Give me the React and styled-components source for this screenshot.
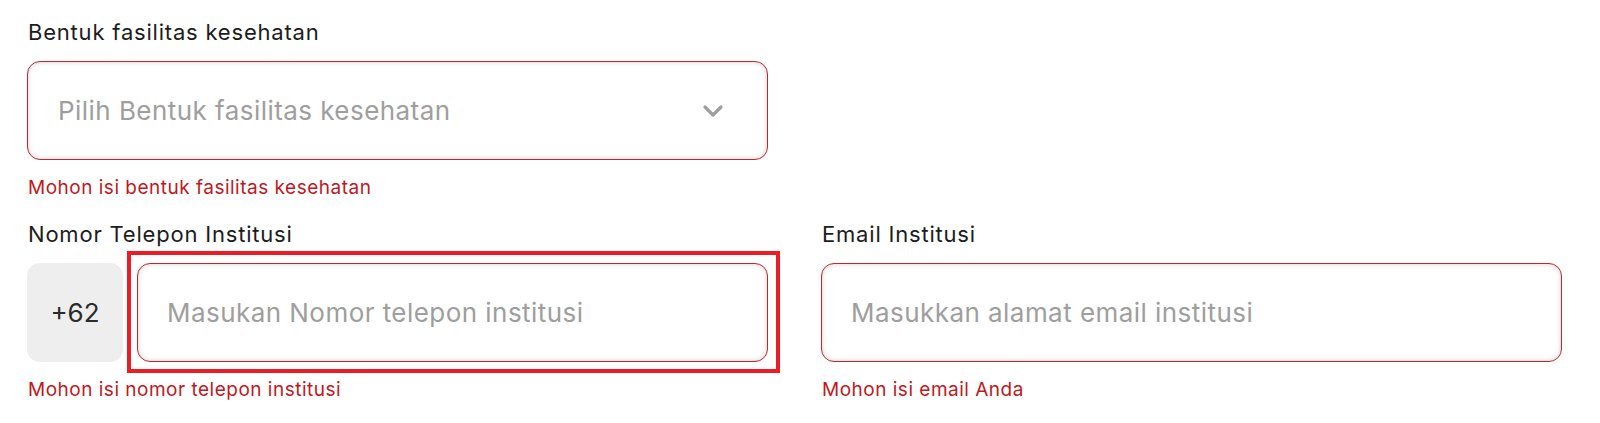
import React from "react";
import styled, { createGlobalStyle } from "styled-components";

const Global = createGlobalStyle`
  html, body { margin: 0; padding: 0; background: #ffffff; }
  body { font-family: Inter, "Noto Sans", sans-serif; }
  * { box-sizing: border-box; }
`;

const Form = styled.form`
  display: grid;
  grid-template-columns: 741px 741px;
  column-gap: 53px;
  row-gap: 20px;
  padding: 18px 0 0 27px;
`;

const Field = styled.div`
  display: flex;
  flex-direction: column;
  grid-column: ${(p) => (p.$full ? "1 / 2" : "auto")};
`;

const Label = styled.label`
  font-size: 22px;
  line-height: 28px;
  letter-spacing: 0.8px;
  color: #1c1c1c;
  margin-bottom: 15px;
  padding-left: 1px;
`;

const ErrorText = styled.span`
  font-size: 19px;
  line-height: 24px;
  letter-spacing: 0.5px;
  color: #c0181d;
  margin-top: 16px;
  padding-left: 1px;
`;

const controlBase = `
  height: 99px;
  border: 1.5px solid #c0262a;
  border-radius: 13px;
  background: #ffffff;
  box-shadow: inset 0 0 5px rgba(0, 0, 0, 0.2);
  font-family: Inter, "Noto Sans", sans-serif;
  font-size: 26px;
  letter-spacing: 0.45px;
`;

const SelectBox = styled.div`
  ${controlBase}
  display: flex;
  align-items: center;
  justify-content: space-between;
  padding: 0 43px 0 30px;
  cursor: pointer;
`;

const Placeholder = styled.span`
  color: #9e9e9e;
`;

const Chevron = styled.svg`
  width: 22px;
  height: 14px;
  display: block;
`;

const PhoneRow = styled.div`
  display: flex;
  gap: 14px;
`;

const Prefix = styled.div`
  width: 96px;
  height: 99px;
  flex: none;
  border-radius: 13px;
  background: #eeeeee;
  display: flex;
  align-items: center;
  justify-content: center;
  font-size: 26px;
  color: #2b2b2b;
`;

const InputWrap = styled.div`
  position: relative;
  flex: 1;
  display: flex;
`;

const Highlight = styled.span`
  position: absolute;
  top: -12px;
  left: -10px;
  right: -12px;
  bottom: -11px;
  border: 4px solid #ed1c24;
  pointer-events: none;
`;

const TextInput = styled.input`
  ${controlBase}
  width: 100%;
  padding: 0 29px;
  color: #222;
  outline: none;
  &::placeholder {
    color: #9e9e9e;
  }
`;

export default function App() {
  return (
    <>
      <Global />
      <Form onSubmit={(e) => e.preventDefault()}>
        <Field $full>
          <Label>Bentuk fasilitas kesehatan</Label>
          <SelectBox role="combobox">
            <Placeholder>Pilih Bentuk fasilitas kesehatan</Placeholder>
            <Chevron viewBox="0 0 22 14" fill="none">
              <path
                d="M3 3 L11 11 L19 3"
                stroke="#9e9e9e"
                strokeWidth="3.2"
                strokeLinecap="round"
                strokeLinejoin="round"
              />
            </Chevron>
          </SelectBox>
          <ErrorText>Mohon isi bentuk fasilitas kesehatan</ErrorText>
        </Field>
        <div />
        <Field>
          <Label>Nomor Telepon Institusi</Label>
          <PhoneRow>
            <Prefix>+62</Prefix>
            <InputWrap>
              <TextInput placeholder="Masukan Nomor telepon institusi" />
              <Highlight />
            </InputWrap>
          </PhoneRow>
          <ErrorText>Mohon isi nomor telepon institusi</ErrorText>
        </Field>
        <Field>
          <Label>Email Institusi</Label>
          <TextInput placeholder="Masukkan alamat email institusi" />
          <ErrorText>Mohon isi email Anda</ErrorText>
        </Field>
      </Form>
    </>
  );
}
